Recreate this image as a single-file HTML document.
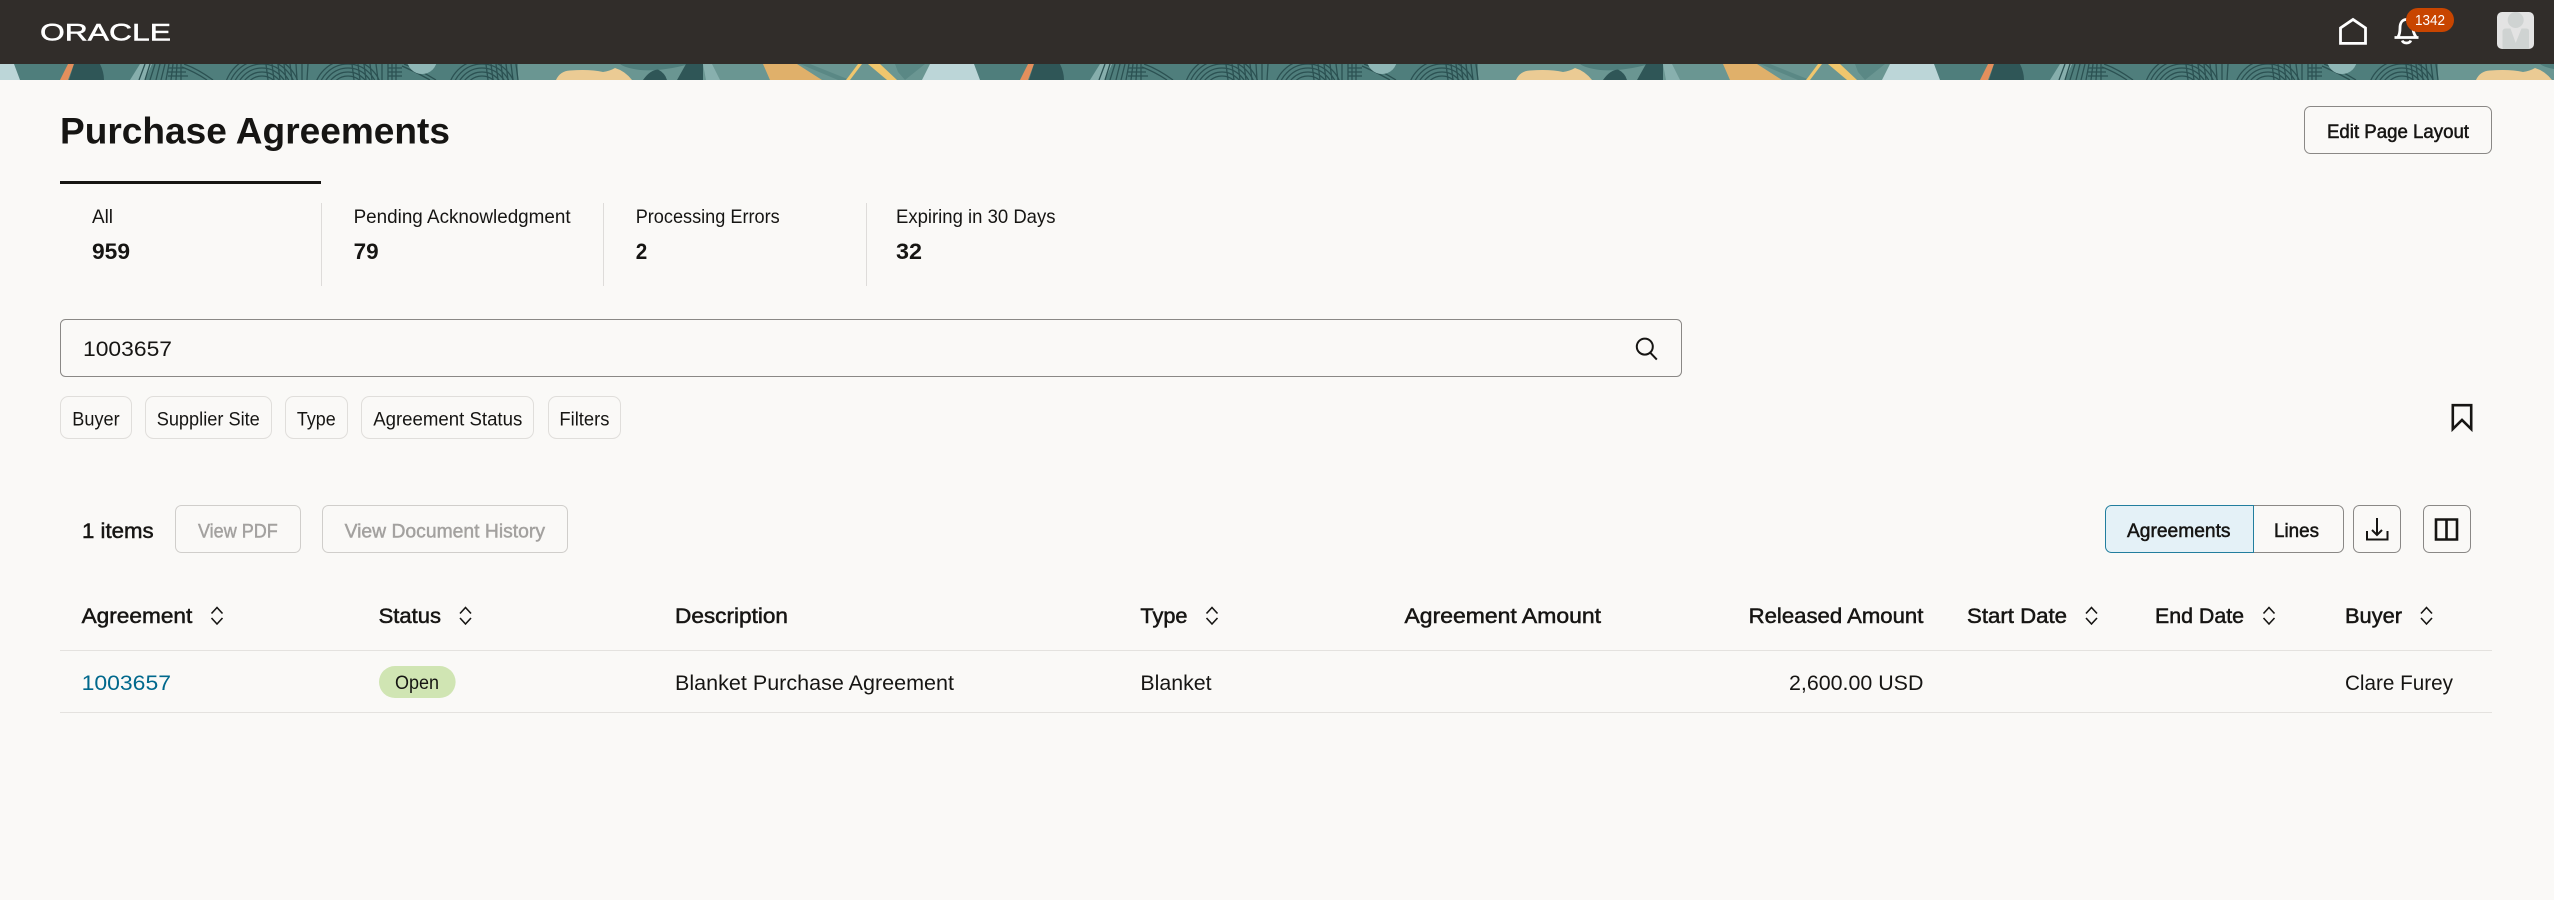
<!DOCTYPE html>
<html lang="en">
<head>
<meta charset="utf-8">
<title>Purchase Agreements</title>
<style>
html,body{margin:0;padding:0;background:#faf9f7;width:2554px;height:900px;overflow:hidden}
svg{display:block}
text{font-family:"Liberation Sans",Arial,sans-serif;fill:#161513}
.l{font-size:19.2px}
.sb{font-size:19.2px;stroke:#161513;stroke-width:.5px}
.h{font-size:21px;stroke:#161513;stroke-width:.5px}
.c{font-size:21px}
.d{font-size:19.2px;fill:#a3a19f;stroke:#a3a19f;stroke-width:.45px}
.v{font-size:22px;font-weight:700}
.box{fill:none;stroke:#8a8886;stroke-width:1}
.chip{fill:none;stroke:#e0dedb;stroke-width:1}
.dis{fill:none;stroke:#d0cecb;stroke-width:1}
.ic{fill:none;stroke:#161513;stroke-width:2}
.so{fill:none;stroke:#161513;stroke-width:1.6}
.wh{fill:none;stroke:#fff;stroke-width:2.8}
</style>
</head>
<body>
<svg xmlns="http://www.w3.org/2000/svg" width="2554" height="900" viewBox="0 0 2554 900">
<defs>
<pattern id="tile" patternUnits="userSpaceOnUse" x="0" y="64" width="960" height="16">
  <rect width="960" height="16" fill="#4f7e7c"/>
  <rect x="518" width="442" height="16" fill="#6a9692"/>
  <polygon points="0,0 14,0 20,16 0,16" fill="#bcd6d8"/>
  <polygon points="68,0 74,0 68,16 60,16" fill="#e38f5c"/>
  <path d="M74 0H100Q104 8 104 16H69Z" fill="#2f5657"/>
  <polygon points="140,0 152,0 145,16 130,16" fill="#86aeac"/>
  <g fill="none" stroke="#2b5152" stroke-width="1.3">
    <path d="M145 0L139 16M150 0L145 16M155 0L150 16M160 0L156 16M165 0L161 16M169 0L166 16M173 0L171 16M177 0L176 16M181 0V16M168 4H184M168 8H186M168 12H188"/>
    <path d="M182 3Q195 8 207 16M184 0Q198 5 213 16"/>
    <g>
      <circle cx="262" cy="30" r="18"/><circle cx="262" cy="30" r="22"/><circle cx="262" cy="30" r="26"/><circle cx="262" cy="30" r="30"/><circle cx="262" cy="30" r="34"/><circle cx="262" cy="30" r="38"/>
      <path d="M266 0L268 16M272 0L274 16M278 0L280 16M284 0L286 16M290 0L292 16M296 0L297 16M302 0L302 16M308 0L307 16"/>
      <circle cx="348" cy="30" r="18"/><circle cx="348" cy="30" r="22"/><circle cx="348" cy="30" r="26"/><circle cx="348" cy="30" r="30"/><circle cx="348" cy="30" r="34"/>
      <path d="M352 0L354 16M358 0L360 16M364 0L366 16M370 0L372 16M376 0L378 16M382 0L382 16M388 0V16M392 0V16M396 0V16M388 4H402M388 8H402M388 12H402"/>
      <path d="M402 2Q416 8 430 16M404 0Q420 6 436 16"/>
      <circle cx="482" cy="30" r="18"/><circle cx="482" cy="30" r="22"/><circle cx="482" cy="30" r="26"/><circle cx="482" cy="30" r="30"/><circle cx="482" cy="30" r="34"/>
      <path d="M486 0L488 16M491 0L493 16M496 0L498 16M501 0L503 16M506 0L508 16M511 0L513 16M516 0L518 16"/>
    </g>
  </g>
  <circle cx="422" cy="-5" r="15" fill="#8fb7b6"/>
  <path d="M620 0H690Q660 8 640 6Q625 4 620 0Z" fill="#4f7e7c"/>
  <path d="M556 16Q560 7 570 6.5Q590 5 603 8Q610 7 615 4Q625 7 632 16Z" fill="#ebcb94"/>
  <path d="M643 16Q650 6 658 5.5Q665 9 667 16Z" fill="#2f5657"/>
  <polygon points="686,0 703,0 703,16 677,16" fill="#2f5657"/>
  <polygon points="703,0 712,0 720,16 706,16" fill="#88b0ae"/>
  <polygon points="763,0 797,0 822,16 770,16" fill="#e0b06a"/>
  <g fill="#5a8885"><polygon points="800,0 810,0 850,16 838,16"/><polygon points="895,0 925,0 905,16 898,8"/></g>
  <polygon points="858,0 862,0 850,16 846,16" fill="#f0c66d"/>
  <polygon points="868,0 880,0 897,16 887,16" fill="#f0c66d"/>
  <polygon points="930,0 960,0 960,16 922,16" fill="#bcd6d8"/>
</pattern>
</defs>

<rect width="2554" height="900" fill="#faf9f7"/>

<!-- header -->
<rect width="2554" height="64" fill="#312d2a"/>
<rect y="64" width="2554" height="16" fill="url(#tile)"/>
<text x="40" y="40.3" font-size="24.5" textLength="131" lengthAdjust="spacingAndGlyphs" style="fill:#fff;stroke:#fff;stroke-width:.5px">ORACLE</text>

<path class="wh" d="M2340.5 43.4V28L2353 19.5L2365.5 28V43.4Z"/>
<path class="wh" d="M2394.5 37.5H2418.5M2398 37C2400 34 2400 31 2400 28C2400 22 2403 19.5 2406.5 19.5C2410 19.5 2413 22 2413 28C2413 31 2414 34 2416 37M2402.2 40.5A4.5 3.5 0 0 0 2410.8 40.5"/>
<rect x="2406" y="8" width="48" height="24" rx="12" fill="#c84500"/>
<text x="2415" y="25" font-size="14.5" textLength="30" lengthAdjust="spacingAndGlyphs" style="fill:#fff">1342</text>

<clipPath id="av"><rect x="2497" y="12" width="37" height="37" rx="5"/></clipPath>
<g clip-path="url(#av)">
  <rect x="2497" y="12" width="37" height="37" fill="#e3e3e3"/>
  <circle cx="2515.7" cy="20" r="8" fill="#cfd3d2"/>
  <path d="M2502.5 31Q2503 28.5 2506 28.5H2510.5L2515.7 43L2521.5 28.5H2526Q2529 28.5 2529 31V49H2502.5Z" fill="#cfd3d2"/>
</g>

<!-- title -->
<text x="60" y="143.5" font-size="37" font-weight="700" textLength="390" lengthAdjust="spacingAndGlyphs">Purchase Agreements</text>
<rect x="2304.5" y="106.5" width="187" height="47" rx="6" class="box"/>
<text class="sb" x="2327" y="138" textLength="142" lengthAdjust="spacingAndGlyphs">Edit Page Layout</text>

<!-- tabs -->
<rect x="60" y="181" width="261" height="3" fill="#161513"/>
<path d="M321.5 203V286M603.5 203V286M866.5 203V286" stroke="#dedcda" stroke-width="1" fill="none"/>
<text class="l" x="92" y="223" textLength="21" lengthAdjust="spacingAndGlyphs">All</text>
<text class="v" x="92" y="259" textLength="38" lengthAdjust="spacingAndGlyphs">959</text>
<text class="l" x="353.6" y="223" textLength="217" lengthAdjust="spacingAndGlyphs">Pending Acknowledgment</text>
<text class="v" x="353.6" y="259" textLength="25" lengthAdjust="spacingAndGlyphs">79</text>
<text class="l" x="635.7" y="223" textLength="144" lengthAdjust="spacingAndGlyphs">Processing Errors</text>
<text class="v" x="635.7" y="259" textLength="11.5" lengthAdjust="spacingAndGlyphs">2</text>
<text class="l" x="896" y="223" textLength="159.5" lengthAdjust="spacingAndGlyphs">Expiring in 30 Days</text>
<text class="v" x="896" y="259" textLength="26" lengthAdjust="spacingAndGlyphs">32</text>

<!-- search -->
<rect x="60.5" y="319.5" width="1621" height="57" rx="5" class="box"/>
<text class="c" x="83" y="356" textLength="89" lengthAdjust="spacingAndGlyphs">1003657</text>
<circle cx="1644.8" cy="346.6" r="8" class="ic"/>
<path class="ic" d="M1650.4 352.8L1656.8 359.6"/>

<!-- chips -->
<rect x="60.5" y="396.5" width="71" height="42" rx="8" class="chip"/>
<text class="l" x="72.3" y="425.6" textLength="47.3" lengthAdjust="spacingAndGlyphs">Buyer</text>
<rect x="145.5" y="396.5" width="126" height="42" rx="8" class="chip"/>
<text class="l" x="156.7" y="425.6" textLength="103.1" lengthAdjust="spacingAndGlyphs">Supplier Site</text>
<rect x="285.5" y="396.5" width="62" height="42" rx="8" class="chip"/>
<text class="l" x="296.9" y="425.6" textLength="38.8" lengthAdjust="spacingAndGlyphs">Type</text>
<rect x="361.5" y="396.5" width="172" height="42" rx="8" class="chip"/>
<text class="l" x="373.2" y="425.6" textLength="149.1" lengthAdjust="spacingAndGlyphs">Agreement Status</text>
<rect x="548.5" y="396.5" width="72" height="42" rx="8" class="chip"/>
<text class="l" x="559.4" y="425.6" textLength="50" lengthAdjust="spacingAndGlyphs">Filters</text>

<path d="M2452.8 405.2H2471.2V429L2462 420L2452.8 429Z" fill="none" stroke="#161513" stroke-width="2.6"/>

<!-- toolbar -->
<text class="h" x="82" y="538" textLength="71.6" lengthAdjust="spacingAndGlyphs">1 items</text>
<rect x="175.5" y="505.5" width="125" height="47" rx="6" class="dis"/>
<text class="d" x="198" y="537.5" textLength="79.7" lengthAdjust="spacingAndGlyphs">View PDF</text>
<rect x="322.5" y="505.5" width="245" height="47" rx="6" class="dis"/>
<text class="d" x="344.6" y="537.5" textLength="200.4" lengthAdjust="spacingAndGlyphs">View Document History</text>

<path d="M2254 505.5H2337.5a6 6 0 0 1 6 6V546.5a6 6 0 0 1 -6 6H2254" class="box"/>
<path d="M2253.5 505.5H2111.5a6 6 0 0 0 -6 6V546.5a6 6 0 0 0 6 6H2253.5Z" fill="#e4f1f7" stroke="#227e9e" stroke-width="1"/>
<text class="sb" x="2127" y="537" textLength="103.5" lengthAdjust="spacingAndGlyphs">Agreements</text>
<text class="sb" x="2274" y="537" textLength="45" lengthAdjust="spacingAndGlyphs">Lines</text>

<rect x="2353.5" y="505.5" width="47" height="47" rx="6" class="box"/>
<path class="ic" d="M2377 518V535M2372 530L2377 535L2382 530M2367 531V539.5H2387.5V531"/>
<rect x="2423.5" y="505.5" width="47" height="47" rx="6" class="box"/>
<path d="M2436 519.5H2457V539.5H2436ZM2446.5 519.5V539.5" fill="none" stroke="#161513" stroke-width="2.6"/>

<!-- table -->
<text class="h" x="81.6" y="623" textLength="110.7" lengthAdjust="spacingAndGlyphs">Agreement</text>
<path class="so" d="M211.5 613.5L217 607.5L222.5 613.5M211.5 618L217 624L222.5 618"/>
<text class="h" x="378.6" y="623" textLength="62.4" lengthAdjust="spacingAndGlyphs">Status</text>
<path class="so" d="M460 613.5L465.5 607.5L471 613.5M460 618L465.5 624L471 618"/>
<text class="h" x="675" y="623" textLength="113" lengthAdjust="spacingAndGlyphs">Description</text>
<text class="h" x="1140.4" y="623" textLength="47.1" lengthAdjust="spacingAndGlyphs">Type</text>
<path class="so" d="M1206.5 613.5L1212 607.5L1217.5 613.5M1206.5 618L1212 624L1217.5 618"/>
<text class="h" x="1404.5" y="623" textLength="196.5" lengthAdjust="spacingAndGlyphs">Agreement Amount</text>
<text class="h" x="1748.6" y="623" textLength="174.8" lengthAdjust="spacingAndGlyphs">Released Amount</text>
<text class="h" x="1967" y="623" textLength="100" lengthAdjust="spacingAndGlyphs">Start Date</text>
<path class="so" d="M2086 613.5L2091.5 607.5L2097 613.5M2086 618L2091.5 624L2097 618"/>
<text class="h" x="2155" y="623" textLength="89" lengthAdjust="spacingAndGlyphs">End Date</text>
<path class="so" d="M2263.5 613.5L2269 607.5L2274.5 613.5M2263.5 618L2269 624L2274.5 618"/>
<text class="h" x="2345" y="623" textLength="57" lengthAdjust="spacingAndGlyphs">Buyer</text>
<path class="so" d="M2421 613.5L2426.5 607.5L2432 613.5M2421 618L2426.5 624L2432 618"/>

<path d="M60 650.5H2492M60 712.5H2492" stroke="#e4e2df" stroke-width="1" fill="none"/>

<text class="c" x="81.6" y="690" textLength="89.4" lengthAdjust="spacingAndGlyphs" style="fill:#00688c">1003657</text>
<rect x="379" y="666" width="76.6" height="32" rx="16" fill="#d0e5b3"/>
<text class="l" x="395" y="689" textLength="44" lengthAdjust="spacingAndGlyphs">Open</text>
<text class="c" x="675" y="690" textLength="279" lengthAdjust="spacingAndGlyphs">Blanket Purchase Agreement</text>
<text class="c" x="1140.4" y="690" textLength="71.2" lengthAdjust="spacingAndGlyphs">Blanket</text>
<text class="c" x="1789" y="690" textLength="134.4" lengthAdjust="spacingAndGlyphs">2,600.00 USD</text>
<text class="c" x="2345" y="690" textLength="108" lengthAdjust="spacingAndGlyphs">Clare Furey</text>
</svg>
</body>
</html>
